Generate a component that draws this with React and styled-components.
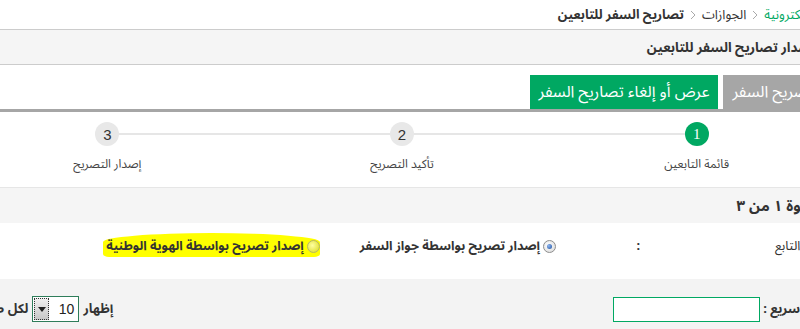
import React from 'react';
import styled, { createGlobalStyle } from 'styled-components';

const green = '#00a862';

const GlobalStyle = createGlobalStyle`
  html, body {
    margin: 0;
    padding: 0;
    background: #fff;
    overflow: hidden;
  }
  body {
    direction: rtl;
    font-family: 'Noto Sans Arabic', 'Noto Sans Arabic UI', 'DejaVu Sans', sans-serif;
    color: #333;
  }
`;

const Page = styled.div`
  margin: 0 -44px 0 -40px;
`;

const Breadcrumb = styled.nav`
  display: flex;
  align-items: center;
  gap: 6px;
  height: 29px;
  margin-right: -20px;
  font-size: 13px;
`;

const Crumb = styled.span`
  color: ${(p) => (p.$link ? green : '#333')};
  font-weight: ${(p) => (p.$current ? 700 : 400)};
  white-space: nowrap;
`;

const Chevron = () => (
  <svg width='6' height='10' viewBox='0 0 6 10'>
    <polyline points='1,1 5,5 1,9' fill='none' stroke='#aaa' strokeWidth='1' />
  </svg>
);

const TitleBar = styled.header`
  display: flex;
  align-items: center;
  height: 34px;
  padding-right: 29px;
  background: #f5f5f5;
  border-top: 1px solid #ccc;
  border-bottom: 1px solid #ccc;
  font-size: 13.5px;
  font-weight: 700;
  white-space: nowrap;
`;

const TabBar = styled.div`
  display: flex;
  gap: 5px;
  margin: 10px -19px 0 0;
  border-bottom: 3px solid #a6a6a6;
`;

const Tab = styled.div`
  display: flex;
  align-items: center;
  height: 34px;
  padding: 0 9px;
  background: ${(p) => (p.$active ? green : '#a6a6a6')};
  color: #fff;
  font-size: 16px;
  white-space: nowrap;
`;

const Wizard = styled.div`
  display: grid;
  grid-template-columns: repeat(3, 1fr);
  height: 76px;
  padding-top: 10px;
  box-sizing: border-box;
  border-bottom: 1px solid #e6e6e6;
`;

const Step = styled.div`
  position: relative;
  display: flex;
  flex-direction: column;
  align-items: center;
  &:not(:last-child)::after {
    content: '';
    position: absolute;
    top: 11px;
    right: 50%;
    width: 100%;
    height: 2px;
    background: #e6e6e6;
  }
`;

const Circle = styled.span`
  position: relative;
  z-index: 1;
  display: flex;
  align-items: center;
  justify-content: center;
  width: 24px;
  height: 24px;
  border-radius: 50%;
  background: ${(p) => (p.$active ? green : '#e8e8e8')};
  color: ${(p) => (p.$active ? '#fff' : '#333')};
  font-family: ${(p) => (p.$active ? "'Liberation Serif', serif" : "'Liberation Sans', sans-serif")};
  font-size: 15px;
`;

const StepLabel = styled.span`
  margin-top: 6px;
  font-size: 12px;
  color: #444;
`;

const StepBand = styled.div`
  display: flex;
  align-items: center;
  height: 35px;
  padding-right: 22px;
  background: #f5f5f5;
  font-size: 15px;
  font-weight: 700;
  white-space: nowrap;
`;

const FieldRow = styled.div`
  display: grid;
  grid-template-columns: 200px 86px 1fr;
  align-items: start;
  height: 56px;
  padding-top: 14px;
  box-sizing: border-box;
  font-size: 12.7px;
  line-height: 18px;
`;

const FieldLabel = styled.span`
  padding-right: 24px;
  font-size: 13px;
  white-space: nowrap;
`;

const Colon = styled.span`
  padding-right: 4px;
  font-weight: 700;
`;

const Options = styled.div`
  display: flex;
  align-items: center;
  gap: 40px;
  margin-right: 2px;
`;

const Option = styled.label`
  display: inline-flex;
  align-items: center;
  gap: 3px;
  font-weight: 700;
  white-space: nowrap;
  ${(p) =>
    p.$marked &&
    `
    padding: 4px 0 2px 3px;
    margin: -4px 0 -2px 0;
    background: #ffff00;
    border-radius: 50% 50% 6px 6px / 9px 9px 3px 3px;
  `}
`;

const Radio = styled.span`
  position: relative;
  width: 11px;
  height: 11px;
  border-radius: 50%;
  border: 1px solid ${(p) => (p.$marked ? '#b5b56a' : '#8d8d8d')};
  background: ${(p) =>
    p.$marked
      ? 'radial-gradient(circle at 40% 40%, #ffffa0, #d8d820)'
      : 'radial-gradient(circle at 40% 40%, #fff, #d6d6d6)'};
  &::after {
    content: '';
    display: ${(p) => (p.$checked ? 'block' : 'none')};
    position: absolute;
    top: 3px;
    left: 3px;
    width: 5px;
    height: 5px;
    border-radius: 50%;
    background: radial-gradient(circle at 35% 35%, #8fb6f0, #1d4f9e);
  }
`;

const Toolbar = styled.div`
  display: flex;
  justify-content: space-between;
  align-items: center;
  height: 60px;
  padding: 0 13px 0 9px;
  background: #f3f3f3;
  font-size: 13px;
  font-weight: 700;
`;

const Group = styled.div`
  display: flex;
  align-items: center;
  gap: ${(p) => p.$gap || 4}px;
  white-space: nowrap;
`;

const SearchInput = styled.input`
  width: 147px;
  height: 25px;
  box-sizing: border-box;
  border: 1px solid ${green};
  background: #fff;
  outline: none;
`;

const Select = styled.div`
  display: flex;
  align-items: center;
  justify-content: space-between;
  width: 47px;
  height: 26px;
  box-sizing: border-box;
  border: 1px solid #2e7d5a;
  background: #fff;
  font-family: 'Liberation Sans', sans-serif;
  font-weight: 400;
  font-size: 14px;
  color: #222;
  direction: ltr;
`;

const DropButton = styled.span`
  display: flex;
  align-items: center;
  justify-content: center;
  width: 15px;
  height: 22px;
  margin-left: 1px;
  outline: 1px dotted #333;
  outline-offset: -1px;
  background: linear-gradient(#f2f2f2, #c6c6c6);
`;

const SelectValue = styled.span`
  padding-right: 4px;
`;

const App = () => {
  return (
    <>
      <GlobalStyle />
      <Page>
        <Breadcrumb>
          <Crumb $link>الخدمات الإلكترونية</Crumb>
          <Chevron />
          <Crumb>الجوازات</Crumb>
          <Chevron />
          <Crumb $current>تصاريح السفر للتابعين</Crumb>
        </Breadcrumb>

        <TitleBar>إصدار تصاريح السفر للتابعين</TitleBar>

        <TabBar>
          <Tab>إصدار تصريح السفر</Tab>
          <Tab $active>عرض أو إلغاء تصاريح السفر</Tab>
        </TabBar>

        <Wizard>
          <Step>
            <Circle $active>1</Circle>
            <StepLabel>قائمة التابعين</StepLabel>
          </Step>
          <Step>
            <Circle>2</Circle>
            <StepLabel>تأكيد التصريح</StepLabel>
          </Step>
          <Step>
            <Circle>3</Circle>
            <StepLabel>إصدار التصريح</StepLabel>
          </Step>
        </Wizard>

        <StepBand>خطوة ١ من ٣</StepBand>

        <FieldRow>
          <FieldLabel>نوع التابع</FieldLabel>
          <Colon>:</Colon>
          <Options>
            <Option>
              <Radio $checked />
              إصدار تصريح بواسطة جواز السفر
            </Option>
            <Option $marked>
              <Radio $marked />
              إصدار تصريح بواسطة الهوية الوطنية
            </Option>
          </Options>
        </FieldRow>

        <Toolbar>
          <Group $gap={3}>
            <span>بحث سريع :</span>
            <SearchInput />
          </Group>
          <Group $gap={4}>
            <span>إظهار</span>
            <Select>
              <DropButton>
                <svg width='8' height='5' viewBox='0 0 8 5'>
                  <polygon points='0,0 8,0 4,5' fill='#222' />
                </svg>
              </DropButton>
              <SelectValue>10</SelectValue>
            </Select>
            <span>لكل صفحة</span>
          </Group>
        </Toolbar>
      </Page>
    </>
  );
};

export default App;
